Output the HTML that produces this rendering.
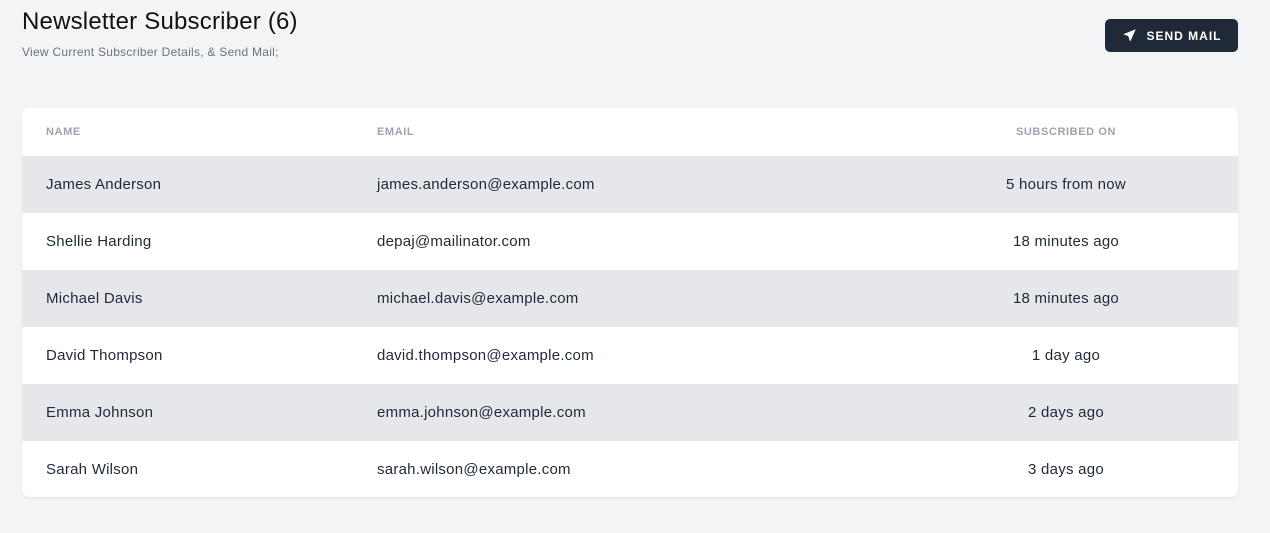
<!DOCTYPE html>
<html><head><style>
body{margin:0;background:#f3f4f6;font-family:"Liberation Sans",sans-serif;width:1270px;height:533px;overflow:hidden;position:relative}
h1{position:absolute;left:22px;top:8px;margin:0;font-size:24px;font-weight:500;color:#111;letter-spacing:0.2px}
.sub{position:absolute;left:22px;top:45px;font-size:12px;color:#6b7280;letter-spacing:0.27px}
.btn{position:absolute;left:1105px;top:19px;width:133px;height:33px;background:#1f2937;border-radius:5px;color:#fff;font-size:12px;font-weight:bold;letter-spacing:1px;display:flex;align-items:center;justify-content:center;gap:10px}
.card{position:absolute;left:22px;top:108px;width:1216px;height:389px;background:#fff;border-radius:7px;overflow:hidden;box-shadow:0 1px 2px rgba(0,0,0,.08)}
.row{height:57px;display:flex;align-items:center;font-size:15px;color:#1f2937;letter-spacing:0.25px;position:relative}
.row.h{height:48px;font-size:11px;color:#9ca3af;font-weight:bold;letter-spacing:.6px}
.row:nth-child(even){background:#e5e7eb}
.c1{position:absolute;left:24px}.c2{position:absolute;left:355px}.c3{position:absolute;left:844px;width:400px;text-align:center}
</style></head><body>
<h1>Newsletter Subscriber (6)</h1>
<div class="sub">View Current Subscriber Details, &amp; Send Mail;</div>
<div class="btn"><svg width="15" height="15" viewBox="0 0 24 24"><path d="M22 2L2 10l8 3 3 9z" fill="#fff"/></svg>SEND MAIL</div>
<div class="card">
<div class="row h"><span class="c1">NAME</span><span class="c2">EMAIL</span><span class="c3">SUBSCRIBED ON</span></div>
<div class="row"><span class="c1">James Anderson</span><span class="c2">james.anderson@example.com</span><span class="c3">5 hours from now</span></div>
<div class="row"><span class="c1">Shellie Harding</span><span class="c2">depaj@mailinator.com</span><span class="c3">18 minutes ago</span></div>
<div class="row"><span class="c1">Michael Davis</span><span class="c2">michael.davis@example.com</span><span class="c3">18 minutes ago</span></div>
<div class="row"><span class="c1">David Thompson</span><span class="c2">david.thompson@example.com</span><span class="c3">1 day ago</span></div>
<div class="row"><span class="c1">Emma Johnson</span><span class="c2">emma.johnson@example.com</span><span class="c3">2 days ago</span></div>
<div class="row"><span class="c1">Sarah Wilson</span><span class="c2">sarah.wilson@example.com</span><span class="c3">3 days ago</span></div>
</div>
</body></html>
